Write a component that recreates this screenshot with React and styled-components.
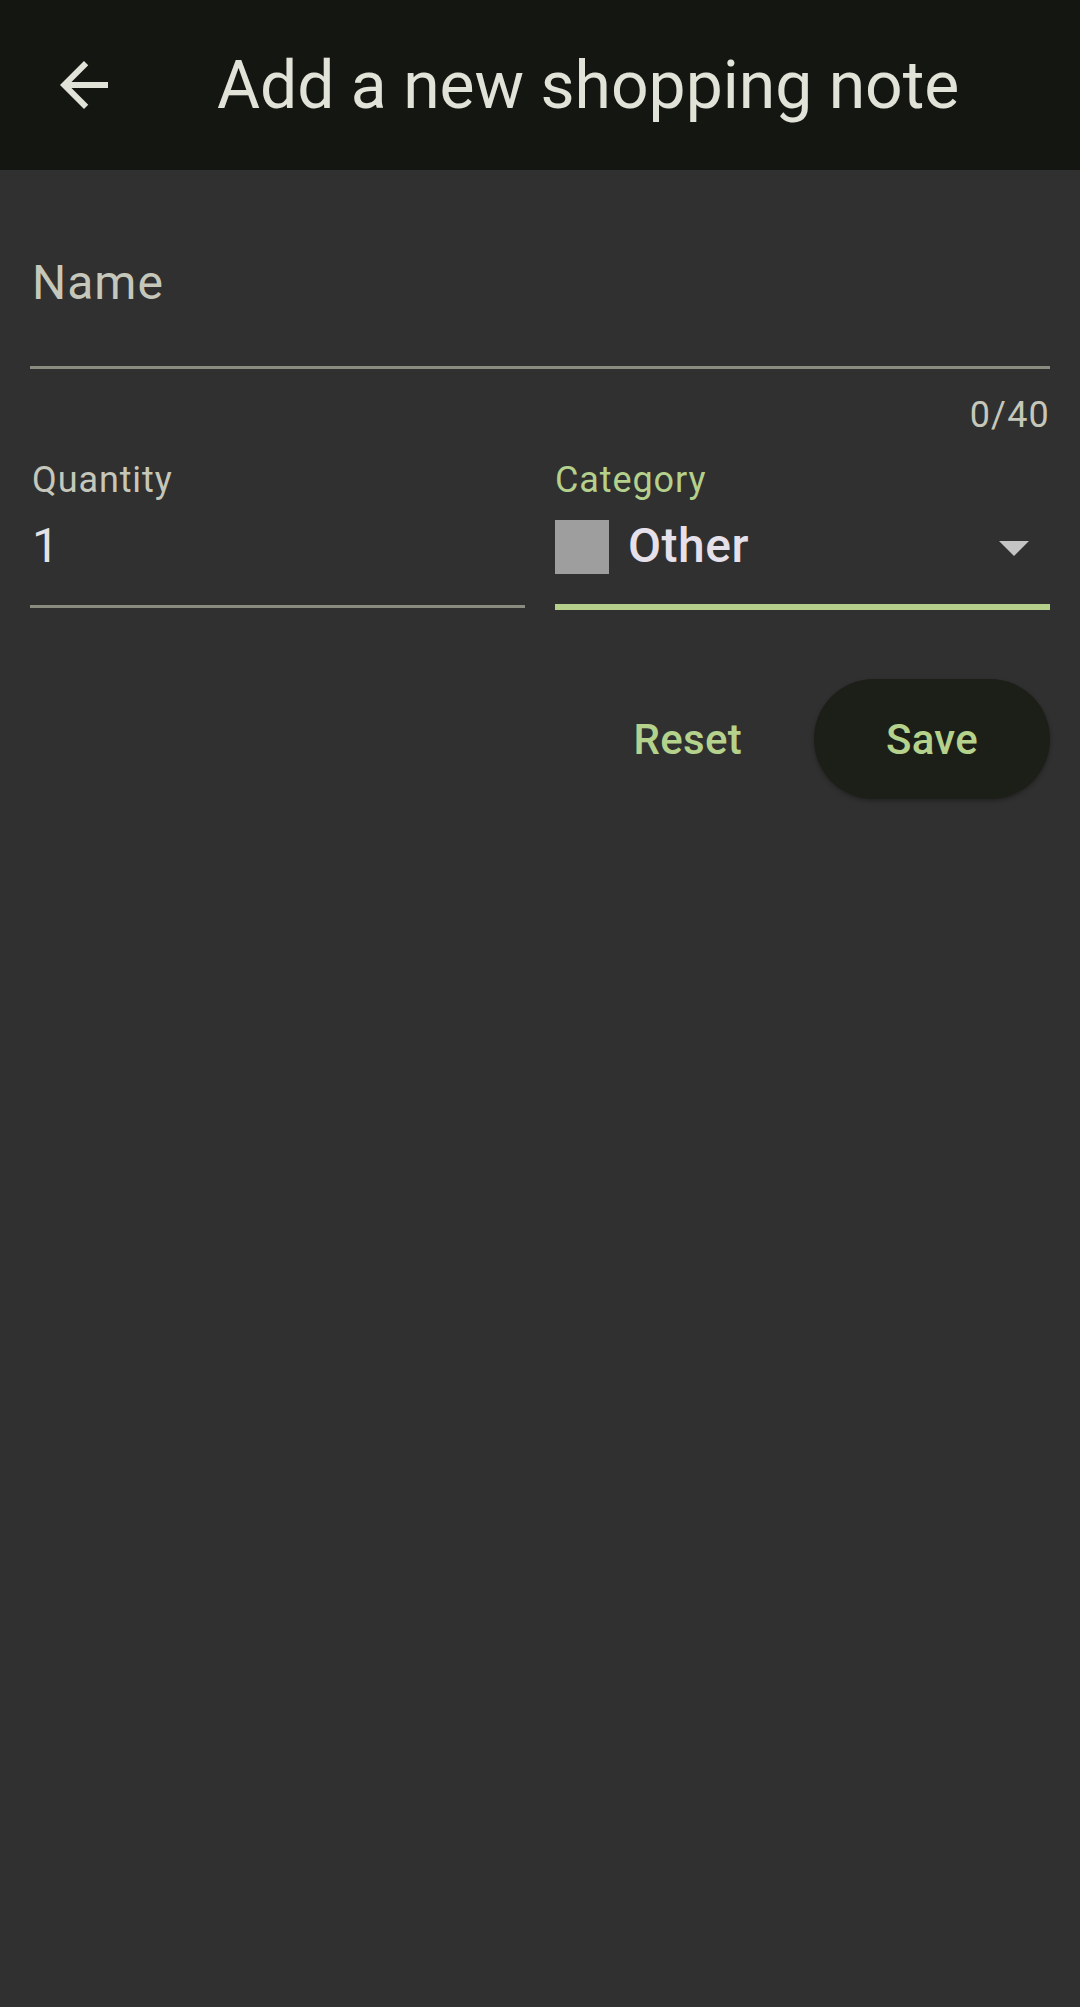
import React from 'react';
import styled, { createGlobalStyle } from 'styled-components';

const GlobalStyle = createGlobalStyle`
  html, body {
    margin: 0;
    padding: 0;
    background: #303030;
    font-family: Roboto, "Noto Sans", sans-serif;
  }
`;

const Page = styled.div`
  min-height: 2007px;
  background: #303030;
  display: flex;
  flex-direction: column;
`;

const TopBar = styled.header`
  height: 170px;
  background: #131611;
  display: flex;
  align-items: center;
  padding-left: 48px;
  box-sizing: border-box;
`;

const BackButton = styled.button`
  width: 72px;
  height: 72px;
  padding: 0;
  border: none;
  background: transparent;
  display: flex;
  align-items: center;
  justify-content: center;
  color: #e2e3d8;
  margin-right: 97px;
`;

const Title = styled.h1`
  margin: 0;
  font-size: 66px;
  font-weight: 400;
  line-height: 78px;
  color: #e2e3d8;
  margin-top: 2px;
`;

const Form = styled.main`
  padding: 85px 30px 0;
  display: flex;
  flex-direction: column;
`;

const BigLabel = styled.div`
  font-size: 48px;
  line-height: 56px;
  letter-spacing: 1px;
  color: #c6c7bb;
  padding-left: 2px;
`;

const Underline = styled.div`
  height: ${p => (p.$focused ? 6 : 3)}px;
  background: ${p => (p.$focused ? '#b4d08a' : '#8a8c80')};
  margin-top: ${p => p.$gap}px;
`;

const Counter = styled.div`
  align-self: flex-end;
  font-size: 36px;
  line-height: 42px;
  letter-spacing: 1.2px;
  color: #c6c7bb;
  margin-top: 25px;
`;

const FieldRow = styled.div`
  display: grid;
  grid-template-columns: 1fr 1fr;
  column-gap: 30px;
  margin-top: 23px;
`;

const Field = styled.div`
  display: flex;
  flex-direction: column;
`;

const SmallLabel = styled.div`
  font-size: 36px;
  line-height: 42px;
  letter-spacing: 0.9px;
  color: ${p => (p.$active ? '#b5d08c' : '#c6c7bb')};
  padding-left: ${p => (p.$active ? 0 : 2)}px;
`;

const ValueLine = styled.div`
  margin-top: 17px;
  height: 56px;
  display: flex;
  align-items: center;
  font-size: 48px;
  line-height: 56px;
  letter-spacing: 0.5px;
  color: #e6e1e6;
  padding-left: ${p => (p.$inset ? 0 : 2)}px;
`;

const Swatch = styled.span`
  width: 54px;
  height: 54px;
  background: #9e9e9e;
  margin-right: 19px;
  flex-shrink: 0;
  transform: translateY(1px);
`;

const SelectText = styled.span`
  flex: 1;
  font-weight: 500;
  color: #e6e0ea;
`;

const Caret = styled.span`
  width: 0;
  height: 0;
  border-left: 15px solid transparent;
  border-right: 15px solid transparent;
  border-top: 15px solid #c4c4c4;
  margin-right: 21px;
  transform: translateY(2px);
`;

const Actions = styled.div`
  display: flex;
  justify-content: flex-end;
  align-items: center;
  gap: 36px;
  margin-top: 69px;
`;

const TextButton = styled.button`
  height: 120px;
  padding: 0 36px;
  border: none;
  background: transparent;
  font-family: Roboto, sans-serif;
  font-size: 42px;
  font-weight: 500;
  letter-spacing: 0.3px;
  color: #b4d28c;
`;

const PillButton = styled(TextButton)`
  width: 236px;
  padding: 0;
  border-radius: 60px;
  background: #1c1f18;
  box-shadow: 0 2px 4px rgba(0, 0, 0, 0.3);
`;

function ArrowBack() {
  return (
    <svg width="72" height="72" viewBox="0 0 24 24" fill="currentColor">
      <path d="M20 11H7.83l5.59-5.59L12 4l-8 8 8 8 1.41-1.41L7.83 13H20v-2z" />
    </svg>
  );
}

export default function App() {
  return (
    <Page>
      <GlobalStyle />
      <TopBar>
        <BackButton aria-label="Back">
          <ArrowBack />
        </BackButton>
        <Title>Add a new shopping note</Title>
      </TopBar>
      <Form>
        <BigLabel>Name</BigLabel>
        <Underline $gap={55} />
        <Counter>0/40</Counter>
        <FieldRow>
          <Field>
            <SmallLabel>Quantity</SmallLabel>
            <ValueLine>1</ValueLine>
            <Underline $gap={31} />
          </Field>
          <Field>
            <SmallLabel $active>Category</SmallLabel>
            <ValueLine $inset>
              <Swatch />
              <SelectText>Other</SelectText>
              <Caret />
            </ValueLine>
            <Underline $focused $gap={30} />
          </Field>
        </FieldRow>
        <Actions>
          <TextButton>Reset</TextButton>
          <PillButton>Save</PillButton>
        </Actions>
      </Form>
    </Page>
  );
}
